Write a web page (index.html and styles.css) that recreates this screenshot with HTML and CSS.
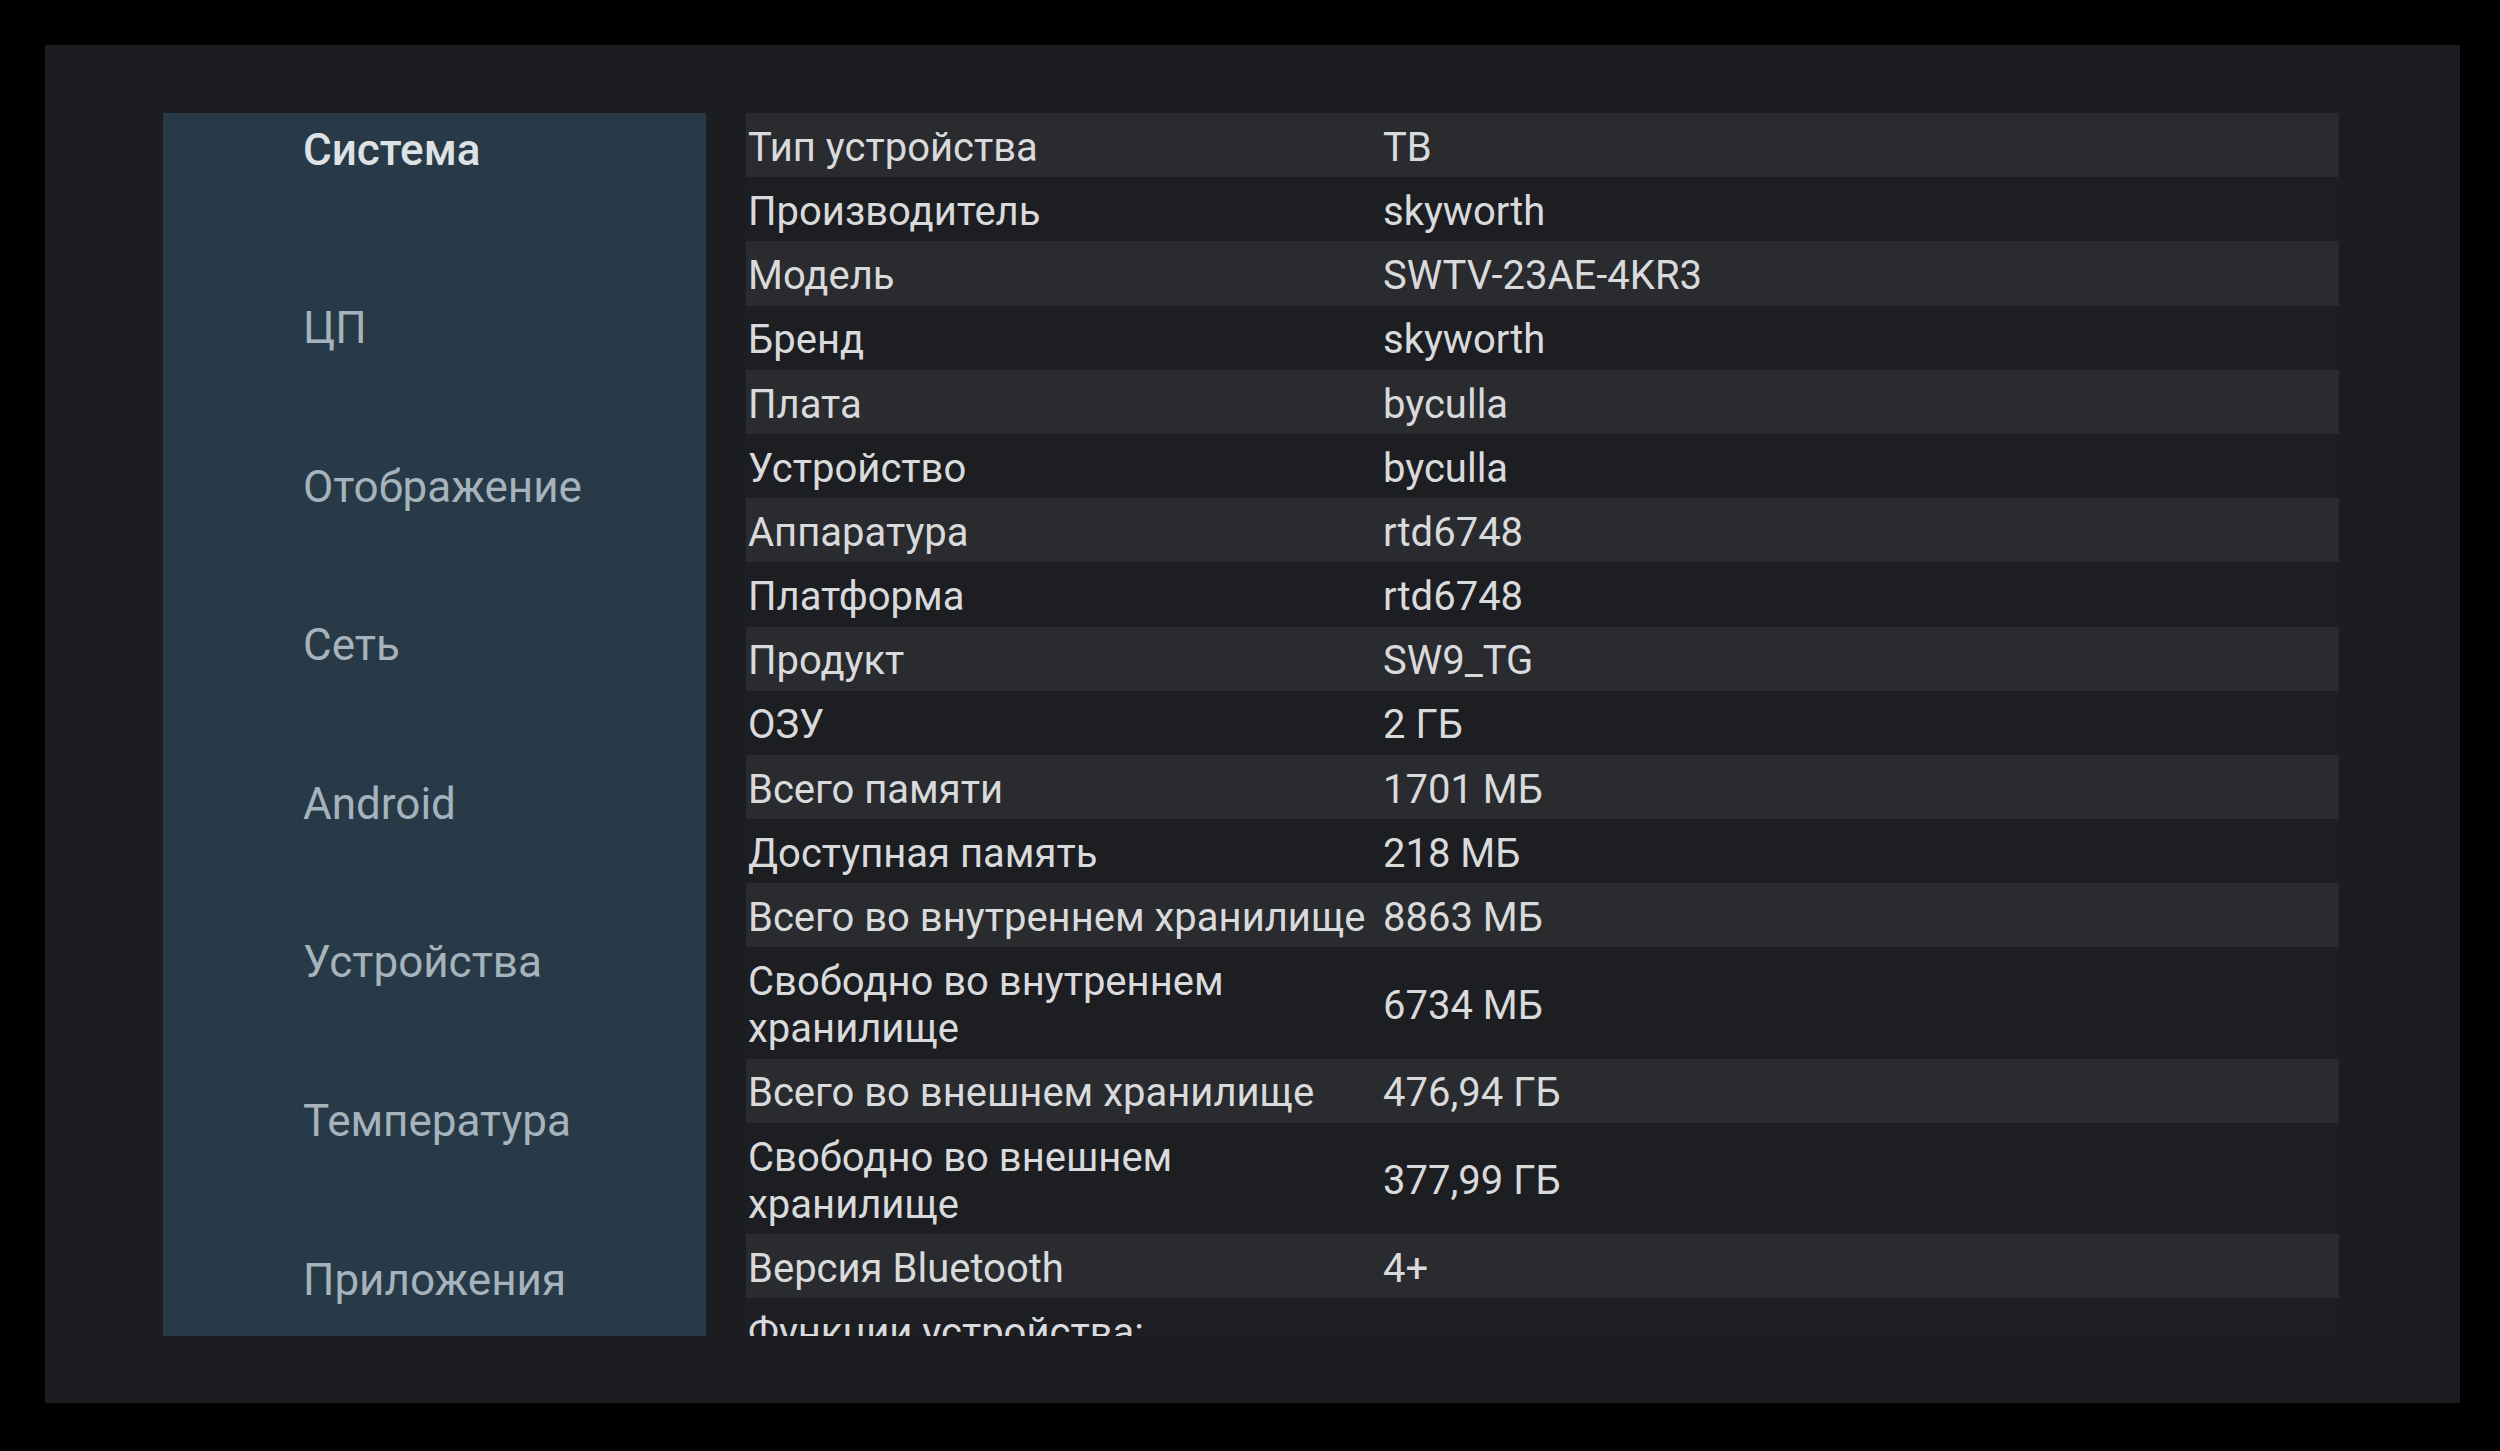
FILE: index.html
```html
<!DOCTYPE html>
<html lang="ru">
<head>
<meta charset="utf-8">
<title>Система</title>
<link rel="stylesheet" href="styles.css">
</head>
<body>
<div class="screen">
  <div class="layout">
    <nav class="sidebar">
      <div class="nav-item active">Система</div>
      <div class="nav-item">ЦП</div>
      <div class="nav-item">Отображение</div>
      <div class="nav-item">Сеть</div>
      <div class="nav-item">Android</div>
      <div class="nav-item">Устройства</div>
      <div class="nav-item">Температура</div>
      <div class="nav-item">Приложения</div>
    </nav>
    <div class="table">
      <div class="row"><div class="label">Тип устройства</div><div class="value">ТВ</div></div>
      <div class="row"><div class="label">Производитель</div><div class="value">skyworth</div></div>
      <div class="row"><div class="label">Модель</div><div class="value">SWTV-23AE-4KR3</div></div>
      <div class="row"><div class="label">Бренд</div><div class="value">skyworth</div></div>
      <div class="row"><div class="label">Плата</div><div class="value">byculla</div></div>
      <div class="row"><div class="label">Устройство</div><div class="value">byculla</div></div>
      <div class="row"><div class="label">Аппаратура</div><div class="value">rtd6748</div></div>
      <div class="row"><div class="label">Платформа</div><div class="value">rtd6748</div></div>
      <div class="row"><div class="label">Продукт</div><div class="value">SW9_TG</div></div>
      <div class="row"><div class="label">ОЗУ</div><div class="value">2 ГБ</div></div>
      <div class="row"><div class="label">Всего памяти</div><div class="value">1701 МБ</div></div>
      <div class="row"><div class="label">Доступная память</div><div class="value">218 МБ</div></div>
      <div class="row"><div class="label">Всего во внутреннем хранилище</div><div class="value">8863 МБ</div></div>
      <div class="row"><div class="label">Свободно во внутреннем хранилище</div><div class="value">6734 МБ</div></div>
      <div class="row"><div class="label">Всего во внешнем хранилище</div><div class="value">476,94 ГБ</div></div>
      <div class="row"><div class="label">Свободно во внешнем хранилище</div><div class="value">377,99 ГБ</div></div>
      <div class="row"><div class="label">Версия Bluetooth</div><div class="value">4+</div></div>
      <div class="row"><div class="label">Функции устройства:</div><div class="value"></div></div>
    </div>
  </div>
</div>
</body>
</html>
```

FILE: styles.css
```css
html, body {
  margin: 0;
  padding: 0;
  background: #000;
  width: 2500px;
  height: 1451px;
  overflow: hidden;
}

body {
  font-family: Roboto, "Noto Sans", "DejaVu Sans", sans-serif;
}

.screen {
  margin: 45px 0 0 45px;
  width: 2415px;
  height: 1358px;
  box-sizing: border-box;
  padding: 68px 121px 67px 118px;
  background: #1c1d21;
}

.layout {
  display: flex;
  gap: 40px;
  height: 1223px;
}

.sidebar {
  width: 543px;
  flex: none;
  box-sizing: border-box;
  padding: 7px 0 0 140px;
  background: #283a47;
  display: flex;
  flex-direction: column;
  gap: 98.6px;
}

.nav-item {
  font-size: 44px;
  line-height: 60px;
  color: #a6b3bc;
  white-space: nowrap;
}

.nav-item.active {
  color: #dfe2e5;
  font-weight: 500;
  margin-bottom: 19.4px;
}

.table {
  flex: 1;
  overflow: hidden;
  display: flex;
  flex-direction: column;
}

.row {
  display: grid;
  grid-template-columns: 637px 1fr;
  align-items: center;
  padding: 10.8px 0 6.4px;
  background: #1d1e22;
  color: #d9dadb;
  font-size: 40px;
  line-height: 47px;
}

.row:nth-child(odd) {
  background: #292b2f;
}

.label {
  padding-left: 2px;
  padding-right: 16px;
}
```
